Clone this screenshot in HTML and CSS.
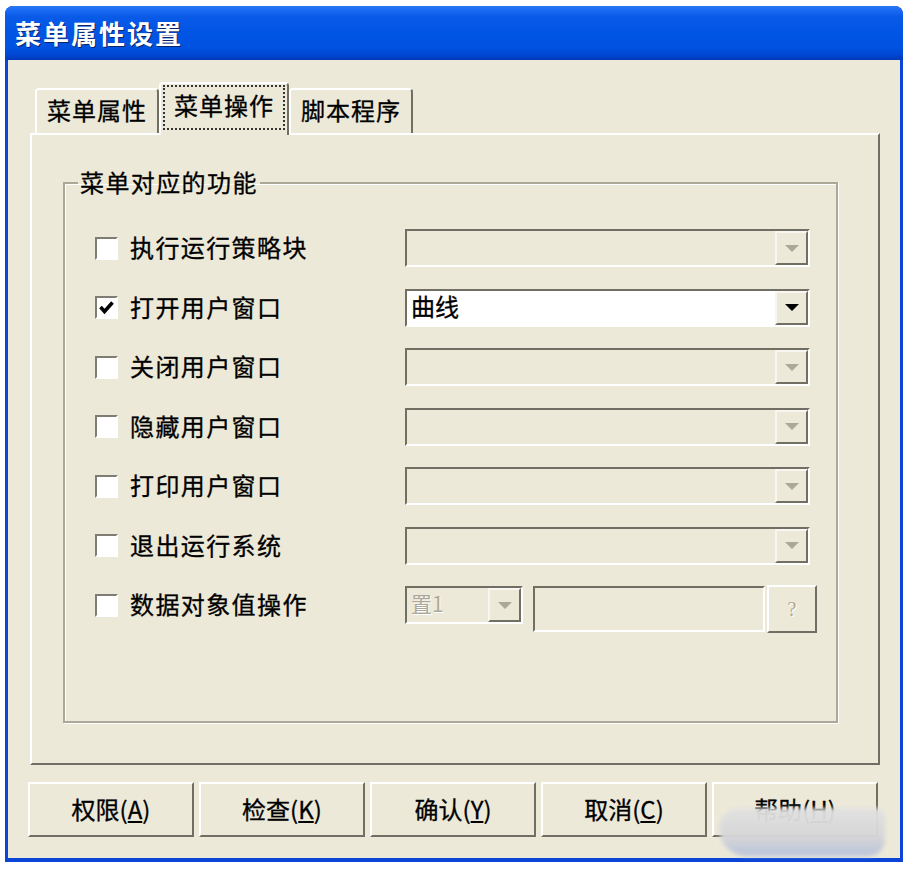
FILE: index.html
```html
<!DOCTYPE html>
<html>
<head>
  <meta charset="UTF-8">
  <title>菜单属性设置</title>
  <link rel="stylesheet" href="styles.css">
</head>
<body>
  <div class="window">
    <div class="titlebar">
      <span class="title">菜单属性设置</span>
    </div>

    <div class="client">
      <div class="tabs">
        <div class="tab">菜单属性</div>
        <div class="tab active"><span class="focus">菜单操作</span></div>
        <div class="tab">脚本程序</div>
      </div>

      <div class="panel">
        <fieldset class="group">
          <legend>菜单对应的功能</legend>

          <div class="row">
            <label class="check"><span class="box"></span><span class="label">执行运行策略块</span></label>
            <div class="combo"><span class="value"></span><span class="drop"></span></div>
          </div>

          <div class="row">
            <label class="check">
              <span class="box">
                <svg viewBox="0 0 19 19" width="19" height="19"><path d="M3.5 9 L7.5 13.5 L15.5 4.5" fill="none" stroke="#000" stroke-width="3.5"/></svg>
              </span>
              <span class="label">打开用户窗口</span>
            </label>
            <div class="combo on"><span class="value">曲线</span><span class="drop"></span></div>
          </div>

          <div class="row">
            <label class="check"><span class="box"></span><span class="label">关闭用户窗口</span></label>
            <div class="combo"><span class="value"></span><span class="drop"></span></div>
          </div>

          <div class="row">
            <label class="check"><span class="box"></span><span class="label">隐藏用户窗口</span></label>
            <div class="combo"><span class="value"></span><span class="drop"></span></div>
          </div>

          <div class="row">
            <label class="check"><span class="box"></span><span class="label">打印用户窗口</span></label>
            <div class="combo"><span class="value"></span><span class="drop"></span></div>
          </div>

          <div class="row">
            <label class="check"><span class="box"></span><span class="label">退出运行系统</span></label>
            <div class="combo"><span class="value"></span><span class="drop"></span></div>
          </div>

          <div class="row">
            <label class="check"><span class="box"></span><span class="label">数据对象值操作</span></label>
            <div class="combo small"><span class="value dim">置1</span><span class="drop"></span></div>
            <div class="field"></div>
            <div class="qbtn">?</div>
          </div>
        </fieldset>
      </div>

      <div class="buttons">
        <button class="btn">权限(<u>A</u>)</button>
        <button class="btn">检查(<u>K</u>)</button>
        <button class="btn">确认(<u>Y</u>)</button>
        <button class="btn">取消(<u>C</u>)</button>
        <button class="btn">帮助(<u>H</u>)</button>
      </div>
    </div>

    <div class="smudge"></div>
  </div>
</body>
</html>
```

FILE: styles.css
```css
/* Windows XP style dialog */
:root {
  --face: #ECE9D8;
  --shadow: #716F64;
  --light: #fff;
  --etch: #ACA899;
  --frame: #0A45D8;
}

* {
  box-sizing: border-box;
}

body {
  margin: 0;
  background: #fff;
  font-family: "Noto Sans CJK SC", "Noto Sans", sans-serif;
  color: #000;
}

.window {
  position: relative;
  width: 898px;
  height: 856px;
  margin: 6px 0 0 5px;
  padding: 0 3px 4px;
  background: var(--frame);
  border-radius: 8px 8px 0 0;
  display: flex;
  flex-direction: column;
}

.titlebar {
  height: 54px;
  margin: 0 -3px;
  padding-left: 10px;
  border-radius: 8px 8px 0 0;
  background: linear-gradient(to bottom, #2a78f0 0%, #1a6af5 8%, #0a5ae8 20%, #0055e5 50%, #0052e0 75%, #0048d4 90%, #0038b8 100%);
  display: flex;
  align-items: center;
}

.title {
  color: #fff;
  font-size: 26px;
  font-weight: 700;
  letter-spacing: 2px;
  text-shadow: 1px 1px 0 #0a246a;
  padding-bottom: 2px;
}

.client {
  flex: 1;
  background: var(--face);
  padding: 22px 20px 0 22px;
  display: flex;
  flex-direction: column;
  -webkit-text-stroke: 0.3px #000;
}

/* tabs */
.tabs {
  display: flex;
  align-items: flex-end;
  height: 51px;
  padding-left: 5px;
}

.tab {
  width: 124px;
  height: 45px;
  padding-bottom: 4px;
  border: 2px solid;
  border-color: var(--light) var(--shadow) transparent var(--light);
  border-bottom: none;
  border-radius: 4px 4px 0 0;
  font-size: 24px;
  letter-spacing: 1px;
  display: flex;
  align-items: center;
  justify-content: center;
}

.tab.active {
  position: relative;
  z-index: 1;
  width: 130px;
  height: 53px;
  margin-bottom: -2px;
  padding: 1px 2px 5px;
  background: var(--face);
  align-items: stretch;
}

.focus {
  flex: 1;
  border: 2px dotted #333;
  display: flex;
  align-items: center;
  justify-content: center;
  padding-bottom: 6px;
}

.panel {
  height: 632px;
  border: 2px solid;
  border-color: var(--light) var(--shadow) var(--shadow) var(--light);
  padding: 34px 40px 0 31px;
}

/* group box */
.group {
  margin: 0;
  height: 554px;
  padding: 32px 0 0 13px;
  border: 2px solid var(--etch);
  box-shadow: inset 1px 1px var(--light), 1px 1px var(--light);
}

.group legend {
  padding: 0 2px 2px;
  font-size: 24px;
  line-height: 26px;
  letter-spacing: 1.4px;
}

.row {
  display: flex;
  align-items: center;
  height: 38px;
  margin-bottom: 21.5px;
}

.check {
  width: 327px;
  padding-left: 17px;
  display: flex;
  align-items: center;
  gap: 12px;
}

.box {
  width: 23px;
  height: 23px;
  border: 2px solid;
  border-color: #7f7d73 var(--light) var(--light) #7f7d73;
  background: #fff;
  display: flex;
}

.label {
  font-size: 24px;
  letter-spacing: 1.4px;
  padding-bottom: 3px;
}

.combo {
  width: 405px;
  height: 38px;
  border: 2px solid;
  border-color: var(--shadow) var(--light) var(--light) var(--shadow);
  background: var(--face);
  display: flex;
}

.combo.on {
  background: #fff;
}

.combo.small {
  width: 118px;
}

.value {
  flex: 1;
  padding-left: 4px;
  font-size: 24px;
  line-height: 30px;
}

.value.dim {
  font-size: 21px;
  color: #aca899;
  -webkit-text-stroke: 0;
  text-shadow: 1px 1px 0 #fff;
}

.drop {
  width: 33px;
  border: 2px solid;
  border-color: #f7f6f0 var(--shadow) var(--shadow) #f7f6f0;
  background: var(--face);
  display: flex;
  align-items: center;
  justify-content: center;
}

.drop::after {
  content: "";
  border-left: 7px solid transparent;
  border-right: 7px solid transparent;
  border-top: 7px solid #aca899;
}

.combo.on .drop::after {
  border-top-color: #000;
}

.field {
  align-self: flex-start;
  width: 232px;
  height: 46px;
  margin-left: 10px;
  border: 2px solid;
  border-color: var(--shadow) var(--light) var(--light) var(--shadow);
}

.qbtn {
  align-self: flex-start;
  width: 50px;
  height: 48px;
  margin: -1px 0 0 2px;
  border: 2px solid;
  border-color: var(--light) var(--shadow) var(--shadow) var(--light);
  color: #aca899;
  -webkit-text-stroke: 0;
  text-shadow: 1px 1px 0 #fff;
  font-family: "Liberation Serif", serif;
  font-size: 20px;
  display: flex;
  align-items: center;
  justify-content: center;
}

/* bottom buttons */
.buttons {
  display: flex;
  gap: 5px;
  margin: 17px 2px 0 -2px;
}

.btn {
  flex: 1;
  height: 55px;
  padding: 0 0 3px;
  border: 2px solid;
  border-color: var(--light) var(--shadow) var(--shadow) var(--light);
  background: var(--face);
  font-family: inherit;
  font-size: 24px;
  color: #000;
  -webkit-text-stroke: 0.3px #000;
}

.btn u {
  text-underline-offset: 2px;
}

/* blurred watermark over the help button */
.smudge {
  position: absolute;
  left: 714px;
  top: 802px;
  width: 166px;
  height: 48px;
  border-radius: 22px 10px 18px 30px;
  background: linear-gradient(to bottom, #e2e2e2, #d6d6d8 60%, #b7c2dc);
  filter: blur(2px);
  opacity: 0.96;
}
```
